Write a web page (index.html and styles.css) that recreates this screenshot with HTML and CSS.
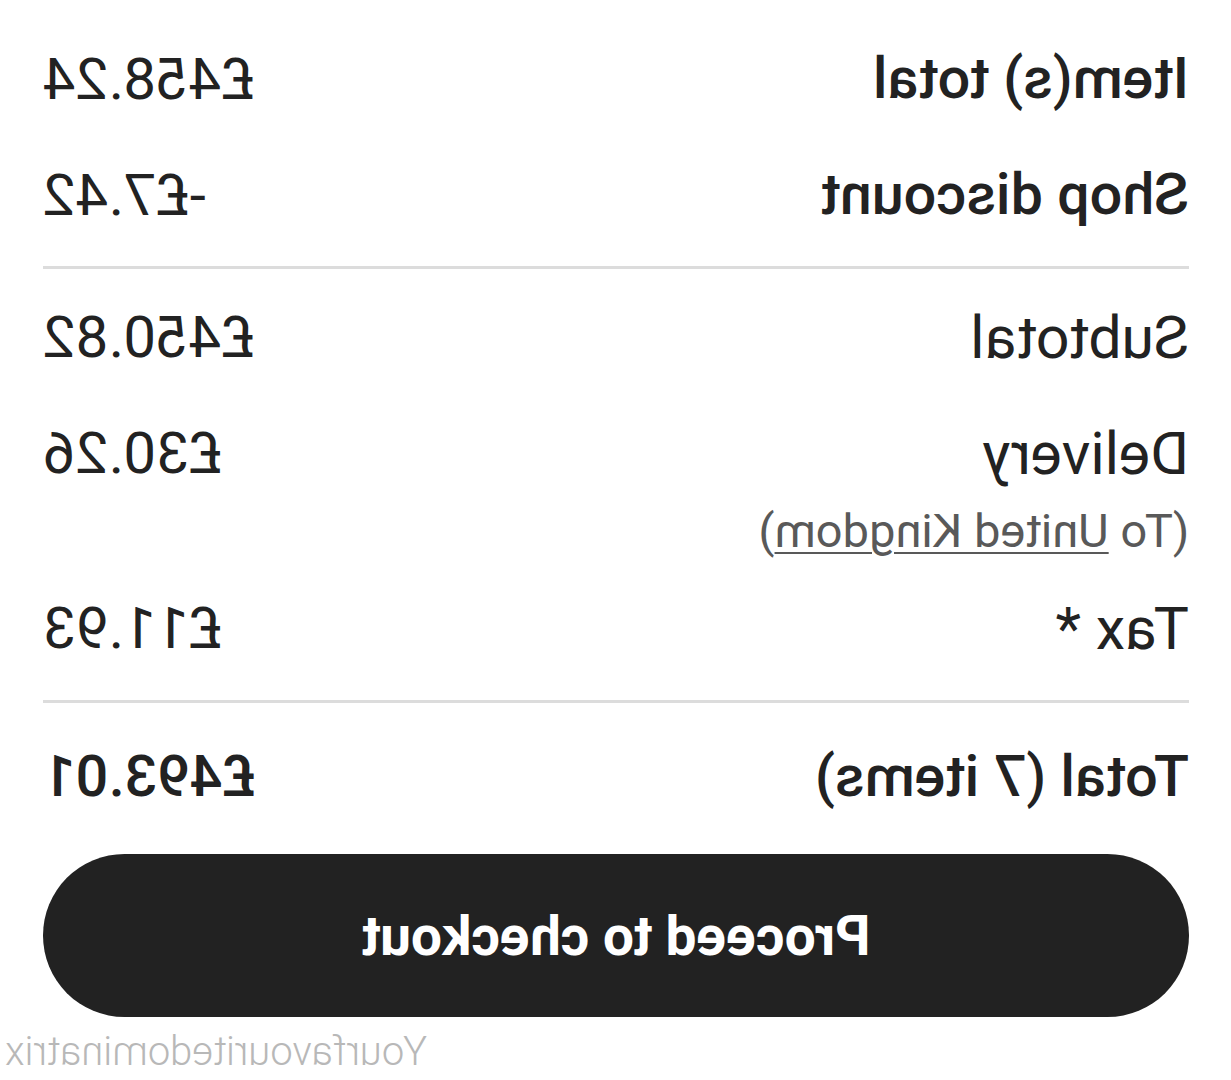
FILE: index.html
```html
<!DOCTYPE html>
<html lang="en">
<head>
<meta charset="utf-8">
<title>Order summary</title>
<link rel="stylesheet" href="styles.css">
</head>
<body>
<div class="page">
  <div class="summary">
    <div class="row first">
      <span class="label strong">Item(s) total</span>
      <span class="value">£458.24</span>
    </div>
    <div class="row">
      <span class="label strong">Shop discount</span>
      <span class="value">-£7.42</span>
    </div>
    <div class="divider"></div>
    <div class="row after-divider">
      <span class="label">Subtotal</span>
      <span class="value">£450.82</span>
    </div>
    <div class="row">
      <span class="label">Delivery</span>
      <span class="value">£30.26</span>
    </div>
    <div class="note">(To <span class="link">United Kingdom</span>)</div>
    <div class="row">
      <span class="label">Tax *</span>
      <span class="value">£11.93</span>
    </div>
    <div class="divider second"></div>
    <div class="row total">
      <span class="label strong">Total (7 items)</span>
      <span class="value strong">£493.01</span>
    </div>
    <button class="checkout">Proceed to checkout</button>
  </div>
  <div class="watermark">Yourfavouritedominatrix</div>
</div>
</body>
</html>
```
FILE: styles.css
```css
html, body {
  margin: 0;
  padding: 0;
  background: #ffffff;
}
body {
  font-family: Roboto, "Liberation Sans", sans-serif;
  color: #222222;
}
.page {
  width: 1231px;
  height: 1080px;
  overflow: hidden;
  transform: scaleX(-1);
  display: flex;
  flex-direction: column;
}
.summary {
  padding: 21px 43px 0 42px;
  display: flex;
  flex-direction: column;
}
.row {
  height: 116px;
  display: flex;
  justify-content: space-between;
  align-items: center;
  font-size: 59px;
  line-height: 1;
}
.label { font-weight: 400; }
.value { font-weight: 400; font-size: 58px; }
.strong { font-weight: 500; font-size: 57.5px; }
.divider {
  height: 3px;
  background: #dcdcdc;
  margin-top: 13px;
}
.divider.second { margin-top: 14px; }
.after-divider { margin-top: 10px; }
.total { margin-top: 16px; }
.note {
  height: 59px;
  line-height: 40px;
  font-size: 47px;
  color: #595959;
}
.link {
  text-decoration: underline;
  text-decoration-thickness: 2px;
  text-underline-offset: 5px;
}
.checkout {
  margin-top: 19px;
  height: 163px;
  border: none;
  border-radius: 82px;
  background: #222222;
  color: #ffffff;
  font-family: Roboto, "Liberation Sans", sans-serif;
  font-weight: 700;
  font-size: 55px;
  padding: 0;
}
.watermark {
  margin-top: 15px;
  align-self: flex-end;
  padding-right: 5px;
  line-height: 40px;
  font-size: 40px;
  font-weight: 300;
  color: #b8b8b8;
}
```
